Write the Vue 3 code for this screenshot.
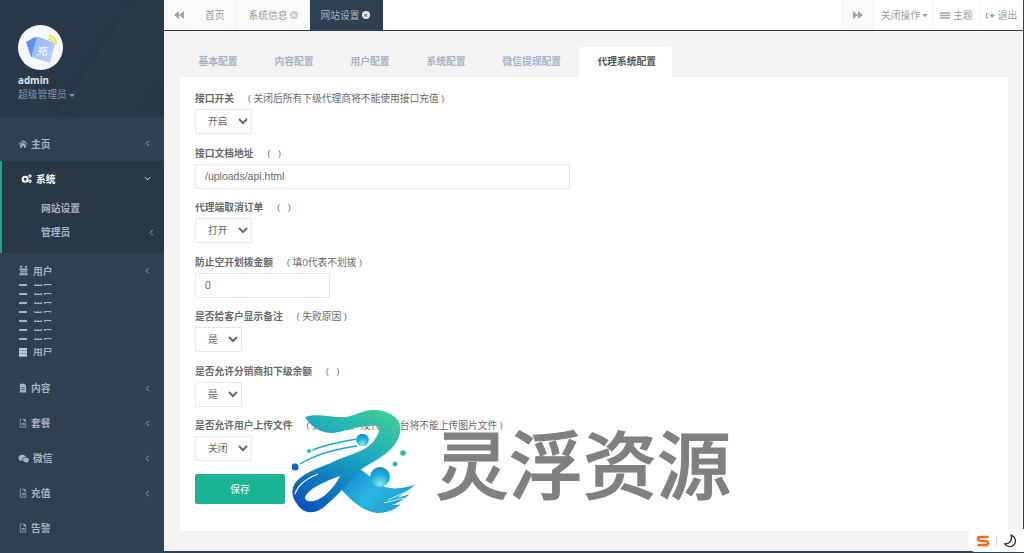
<template>
  <div class="page">
    <aside class="side">
      <div class="profile">
        <svg class="avatar" viewBox="0 0 45 45">
          <defs>
            <linearGradient id="cardFront" x1="0" y1="0" x2="1" y2="1">
              <stop offset="0" stop-color="#8fb0fa" />
              <stop offset="1" stop-color="#c3d5fb" />
            </linearGradient>
          </defs>
          <circle cx="22.500" cy="22.500" r="22.500" fill="#f6f8fc" />
          <path d="M8 17 L18 11.500 L22 32 L13 32 Z" fill="#5c8ff5" />
          <path d="M19 11.500 L37 18 L32 38 L13 32 Z" fill="url(#cardFront)" />
          <path d="M31 10.500a8 8 0 0 1 7 8.500M30.500 13.500a5 5 0 0 1 4.500 5" fill="none" stroke="#efe04a" stroke-width="1.800" />
        </svg>
        <span class="avatar-txt">充</span>
        <div class="name">admin</div>
        <div class="role">超级管理员<i class="caret"></i></div>
      </div>

      <nav class="nav">
        <template v-for="m in menu" :key="m.label">
          <div class="item" :class="{ active: m.open, wide: m.icon === 'users' || m.icon === 'wechat' }">
            <div class="row">
              <svg v-if="m.open" class="ico gears" viewBox="0 0 16 16">
                <circle cx="6" cy="9" r="3.600" fill="none" stroke="#fff" stroke-width="3" />
                <circle cx="13" cy="4.500" r="1.700" fill="none" stroke="#fff" stroke-width="1.600" />
                <circle cx="13" cy="12" r="1.700" fill="none" stroke="#fff" stroke-width="1.600" />
              </svg>
              <svg v-else class="ico" viewBox="0 0 16 16"><path :d="icons[m.icon]" fill-rule="evenodd" /></svg>
              <span class="lbl">{{ m.label }}</span>
              <svg v-if="m.arrow" class="chev" :class="{ down: m.open }" viewBox="0 0 8 8"><path d="M5.500 1 L2.500 4 L5.500 7" /></svg>
            </div>
            <div v-if="m.open" class="subs">
              <div class="sub">网站设置</div>
              <div class="sub">管理员
                <svg class="chev" viewBox="0 0 8 8"><path d="M5.500 1 L2.500 4 L5.500 7" /></svg>
              </div>
            </div>
          </div>
          <div v-if="m.icon === 'users'" class="slices">
            <div v-for="n in 7" :key="n" class="slice">
              <b class="bar"></b><span class="sliver">用户</span>
            </div>
            <div class="slice last">
              <b class="bar big"></b><span class="sliver two">用户</span>
            </div>
          </div>
        </template>
      </nav>
    </aside>

    <main class="main">
      <header class="topbar">
        <div class="tb-btn arrow">
          <svg viewBox="0 0 10 8"><path d="M5 0v8L0 4zM10 0v8L5 4z" /></svg>
        </div>
        <div class="tab">首页</div>
        <div class="tab">系统信息<i class="x">×</i></div>
        <div class="tab cur">网站设置<i class="x">×</i></div>
        <div class="grow"></div>
        <div class="tb-btn arrow">
          <svg viewBox="0 0 10 8"><path d="M0 0v8l5-4zM5 0v8l5-4z" /></svg>
        </div>
        <div class="tb-btn act">关闭操作<i class="caret"></i></div>
        <div class="tb-btn theme">
          <svg viewBox="0 0 12 8"><path d="M0 0h12v2H0zM0 3h12v2H0zM0 6h12v2H0z" /></svg>主题
        </div>
        <div class="tb-btn logout">
          <svg viewBox="0 0 10 8"><path d="M0 1h3v1H1v4h2v1H0zM4 3h2V1l4 3-4 3V5H4z" /></svg>退出
        </div>
      </header>

      <section class="content">
        <div class="cfg-tabs">
          <a v-for="t in tabs" :key="t" class="cfg-tab" :class="{ on: t === '代理系统配置' }">{{ t }}</a>
        </div>
        <form class="panel" @submit.prevent>
          <div v-for="f in fields" :key="f.label" class="group">
            <label class="field-lbl">{{ f.label }}<span class="hint">( {{ f.hint || '\u00a0' }} )</span></label>
            <select v-if="f.options" class="ctl sel" :class="f.size">
              <option v-for="o in f.options" :key="o">{{ o }}</option>
            </select>
            <input v-else class="ctl" :class="f.size" :value="f.value" />
          </div>
          <button class="save">保存</button>
        </form>
      </section>
    </main>

    <!-- watermark laid over the page -->
    <svg class="wm-logo" viewBox="292 410 124 104">
      <defs>
        <linearGradient id="lg1" x1="0.800" y1="0" x2="0.200" y2="1">
          <stop offset="0" stop-color="#3ecb9a" />
          <stop offset="0.400" stop-color="#1aa9c0" />
          <stop offset="1" stop-color="#0a55c0" />
        </linearGradient>
        <linearGradient id="lg2" x1="0" y1="0" x2="1" y2="0.600">
          <stop offset="0" stop-color="#0f6fca" />
          <stop offset="0.600" stop-color="#28b6e0" />
          <stop offset="1" stop-color="#1f9fd0" />
        </linearGradient>
        <radialGradient id="rg1" cx="0.500" cy="0.850" r="0.800">
          <stop offset="0" stop-color="#8fe8f5" />
          <stop offset="0.600" stop-color="#1bb0d8" />
          <stop offset="1" stop-color="#1590c8" />
        </radialGradient>
      </defs>
      <path fill="url(#lg2)" d="M345 460 C358 468 366 472 376 482 C388 491 400 489 415 485 C409 490 403 494 397 498 C403 496 407 495 410 494 C404 499 398 503 392 505 C396 505 399 505 401 504 C395 510 386 513 377 513 C361 511 350 499 336 484 Z" />
      <path fill="url(#lg1)" d="M305 417 C318 412 335 419 347 417 C358 414 364 410 373 410 C391 410 403 420 400 433 C398 444 388 453 378 459 C368 465 358 470 352 478 C344 488 335 498 324 507 C315 514 304 515 297 504 C290 495 291 485 300 478 C310 470 322 467 335 461 C348 455 366 451 373 442 C379 434 381 429 377 426 C362 424 345 432 332 433 C320 433 310 426 305 417 Z" />
      <path fill="#fff" d="M305 497 C309 488 324 482 340 476 C334 488 323 499 314 501 C309 502 305 501 305 497 Z" />
      <path fill="none" stroke="#fff" stroke-width="1.200" d="M295 494 C298 484 308 478 318 474" />
      <path fill="none" stroke="#fff" stroke-width="0.800" d="M388 500 L408 491 M384 503 L404 498" />
      <path fill="none" stroke="#19a8d8" stroke-width="1.300" d="M312 450 C325 445 340 442 356 439 M300 464 C315 455 335 449 357 446" />
      <circle cx="380" cy="477" r="10" fill="url(#rg1)" />
      <circle cx="362.500" cy="440" r="6.300" fill="url(#rg1)" />
      <circle cx="295" cy="467" r="3.600" fill="#1467c8" />
      <circle cx="309" cy="451" r="2" fill="#1bc0c0" />
      <circle cx="403" cy="453" r="2.800" fill="#1fc3ab" />
      <circle cx="395" cy="464" r="2.500" fill="#1fc3ab" />
    </svg>
    <div class="wm-text">灵浮资源</div>

    <div class="float-tool">
      <svg class="s-logo" viewBox="0 0 14 12">
        <path d="M12.500 2 H4 Q2 2 2 3.800 Q2 5.400 4 5.700 L10 6.300 Q12 6.600 12 8.200 Q12 10 10 10 H1.500" fill="none" stroke="#f26a1b" stroke-width="2.600" />
      </svg>
      <i class="sep"></i>
      <svg class="moon" viewBox="0 0 12 12">
        <path d="M7 1 A5 5 0 1 1 1.500 8.500 A5.500 5.500 0 0 0 7 1 Z" fill="none" stroke="#333" stroke-width="1.100" />
      </svg>
    </div>
  </div>
</template>

<script setup>
const icons = {
  home: 'M8 2 1 8l1 1 6-5 6 5 1-1-3-2.500V3h-2v1zM3.500 9.500 8 5.700l4.500 3.800V14h-3v-3h-3v3h-3z',
  users: 'M3 1h3v3H3zM10 1h3v3h-3zM2 5h12v3H2zM3 9h10v2H3zM2 12h12v3H2z',
  file: 'M3 1h7l3 3v11H3zM5 7v1h6V7zM5 10v1h6v-1z',
  fileO: 'M3 1h7l3 3v11H3zM4 2v12h8V5H9V2zM6 8h5v1H6zM6 10.500h5v1H6z',
  wechat: 'M6 2.500c-3 0-5.500 2-5.500 4.500 0 1.400.8 2.600 2 3.400L2 12l2-1c.6.2 1.300.3 2 .3h.5c-.1-.4-.2-.7-.2-1.100 0-2.400 2.200-4.300 5-4.300h.4C11.200 4 8.800 2.500 6 2.500zM16 10.200c0-2-2-3.600-4.400-3.600s-4.300 1.600-4.300 3.600 2 3.600 4.300 3.600c.5 0 1-.1 1.400-.2l1.600.9-.4-1.400c1.100-.7 1.800-1.700 1.800-2.900z',
};

const menu = [
  { label: '主页', icon: 'home', arrow: true },
  { label: '系统', icon: 'gears', arrow: true, open: true },
  { label: '用户', icon: 'users', arrow: true },
  { label: '内容', icon: 'file', arrow: true },
  { label: '套餐', icon: 'fileO', arrow: true },
  { label: '微信', icon: 'wechat', arrow: true },
  { label: '充值', icon: 'fileO', arrow: true },
  { label: '告警', icon: 'fileO' },
];

const tabs = ['基本配置', '内容配置', '用户配置', '系统配置', '微信提现配置', '代理系统配置'];

const fields = [
  { label: '接口开关', hint: '关闭后所有下级代理商将不能使用接口充值', options: ['开启', '关闭'], size: 'w57' },
  { label: '接口文档地址', hint: '', value: '/uploads/api.html', size: 'w375' },
  { label: '代理端取消订单', hint: '', options: ['打开', '关闭'], size: 'w57' },
  { label: '防止空开划拨金额', hint: '填0代表不划拨', value: '0', size: 'w135' },
  { label: '是否给客户显示备注', hint: '失败原因', options: ['是', '否'], size: 'w47' },
  { label: '是否允许分销商扣下级余额', hint: '', options: ['是', '否'], size: 'w47' },
  { label: '是否允许用户上传文件', hint: '关闭后用户及代理后台将不能上传图片文件', options: ['关闭', '开启'], size: 'w57' },
];
</script>

<style scoped>
.page {
  position: relative;
  display: flex;
  width: 1024px;
  height: 553px;
  overflow: hidden;
  background: #2f4050;
  font-family: "Open Sans", "Noto Sans CJK SC", sans-serif;
  font-size: 9.75px;
  color: #676a6c;
}

/* sidebar */
.side { width: 164px; flex: none; background: #2f4050; }
.profile {
  position: relative;
  height: 117px;
  box-sizing: border-box;
  padding: 25px 0 0 18px;
  background: linear-gradient(125deg, #2b3b4b 0%, #283746 55%, #2a3a49 56%, #273644 100%);
}
.avatar { display: block; width: 45px; height: 45px; }
.avatar-txt {
  position: absolute;
  left: 36px;
  top: 44px;
  color: #fff;
  font-size: 11px;
  font-style: italic;
  line-height: 14px;
}
.name { margin-top: 4px; color: #dfe4ed; font-weight: 700; font-size: 9.75px; line-height: 13px; }
.role { color: #8095a8; line-height: 14px; margin-top: 1px; }
.caret {
  display: inline-block;
  margin-left: 2px;
  vertical-align: middle;
  border-top: 3px solid currentColor;
  border-left: 3px solid transparent;
  border-right: 3px solid transparent;
}
.nav { padding-top: 9px; }
.item { color: #a7b1c2; font-weight: 600; }
.row { position: relative; display: flex; align-items: center; height: 35px; padding-left: 18px; }
.ico { width: 10px; height: 10px; margin-right: 3px; fill: #a7b1c2; flex: none; }
.item.wide .ico { width: 11px; height: 11px; margin-right: 4px; }
.chev { position: absolute; right: 13px; top: 14px; width: 7px; height: 7px; fill: none; stroke: #a7b1c2; stroke-width: 1; }
.chev.down { transform: rotate(-90deg); stroke: #fff; }
.item.active { background: #293846; border-left: 2px solid #19aa8d; padding-bottom: 9px; color: #fff; }
.item.active .row { padding-left: 19px; }
.item.active .ico { width: 11px; height: 11px; margin-right: 4px; }
.subs { color: #a7b1c2; padding-top: 1px; margin-bottom: -1px; }
.sub { position: relative; height: 24px; line-height: 24px; padding-left: 39px; }
.sub .chev { top: 8px; right: 9px; }
.slices { margin: -8px 0 9.500px; }
.slice { display: flex; align-items: center; height: 9px; padding-left: 19px; }
.slice.last { height: 18px; }
.bar { width: 8px; height: 2px; background: #a7b1c2; margin-right: 6px; flex: none; }
.bar.big { height: 9px; background: repeating-linear-gradient(#c2c9d4 0 2px, #8a97a8 2px 3px); }
.sliver { height: 2px; line-height: 2px; overflow: hidden; color: #a7b1c2; font-weight: 600; }
.sliver.two { height: 8px; line-height: 8px; }

/* top bar */
.main { flex: 1; display: flex; flex-direction: column; min-width: 0; margin-bottom: 2px; border-right: 1px solid #2f4050; background: #f3f3f4; }
.topbar { display: flex; height: 30px; flex: none; background: #fff; border-bottom: 1px solid #2f4050; color: #999c9e; }
.grow { flex: 1; }
.tab { display: flex; align-items: center; padding: 0 11px 0 12px; background: #fafafa; border-right: 1px solid #f0f0f0; white-space: nowrap; }
.tab.cur { background: #2f4050; color: #a7b1c2; border: 0; padding: 0 13px 0 11px; }
.x {
  display: inline-block;
  width: 8px;
  height: 8px;
  margin-left: 2px;
  border-radius: 50%;
  background: #c8cbce;
  color: #fff;
  font-style: normal;
  font-size: 8px;
  line-height: 8px;
  text-align: center;
}
.tab.cur .x { background: #e6e8ea; color: #2f4050; }
.tb-btn { display: flex; align-items: center; justify-content: center; border-left: 1px solid #f3f3f3; white-space: nowrap; background: #fff; }
.tb-btn svg { fill: #a0a4a8; }
.arrow { width: 30px; background: #fafafa; }
.arrow svg { width: 10px; height: 8px; }
.act { width: 60px; padding-left: 2px; box-sizing: border-box; }
.theme { width: 45px; }
.theme svg { width: 10px; height: 7px; margin-right: 3px; }
.logout { width: 43px; }
.logout svg { width: 9px; height: 7px; margin-right: 3px; }
.topbar > .tb-btn:first-child { border: 0; width: 29px; }

/* config form */
.content { flex: 1; display: flex; flex-direction: column; padding: 16px 15px 20px 16px; min-height: 0; }
.cfg-tabs { display: flex; flex: none; height: 30px; }
.cfg-tab { padding: 0 18.500px; line-height: 30px; color: #a7b1c2; font-weight: 600; white-space: nowrap; }
.cfg-tab.on { background: #fff; color: #555; border-radius: 2px 2px 0 0; margin-left: -1px; padding: 0 16px 0 19px; }
.panel { flex: 1; background: #fff; padding: 15px 15px 0; }
.group { height: 54.500px; }
.field-lbl { display: block; height: 17px; line-height: 14px; font-weight: 700; color: #676a6c; }
.hint { margin-left: 14px; font-weight: 400; }
.ctl {
  display: block;
  box-sizing: border-box;
  height: 25px;
  border: 1px solid #e5e6e7;
  border-radius: 1px;
  background: #fff;
  color: #676a6c;
  font-family: "Liberation Sans", "Noto Sans CJK SC", sans-serif;
  font-size: 10.500px;
  padding: 0 9px;
  outline: none;
}
.sel { padding: 0 0 0 8px; font-size: 9.750px; }
.w57 { width: 57px; }
.w47 { width: 47px; }
.w375 { width: 375px; }
.w135 { width: 135px; }
.save {
  display: block;
  width: 90px;
  height: 30px;
  border: 0;
  border-radius: 2px;
  background: #1ab394;
  color: #fff;
  font: inherit;
}

/* overlay */
.wm-logo { position: absolute; left: 292px; top: 410px; width: 124px; height: 104px; }
.wm-text {
  position: absolute;
  left: 435px;
  top: 418px;
  color: #808080;
  font-family: "Noto Sans CJK SC", sans-serif;
  font-size: 74px;
  font-weight: 500;
  -webkit-text-stroke: 1px #808080;
  line-height: 86px;
  white-space: nowrap;
}
.float-tool {
  position: absolute;
  right: 0;
  top: 529px;
  display: flex;
  align-items: center;
  box-sizing: border-box;
  width: 55px;
  height: 23px;
  padding-left: 7px;
  background: #fff;
  border-radius: 6px 0 0 6px;
}
.s-logo { width: 14px; height: 12px; }
.sep { width: 1px; height: 12px; margin: 0 6px 0 6px; background: #ddd; }
.moon { width: 14px; height: 14px; }
</style>
